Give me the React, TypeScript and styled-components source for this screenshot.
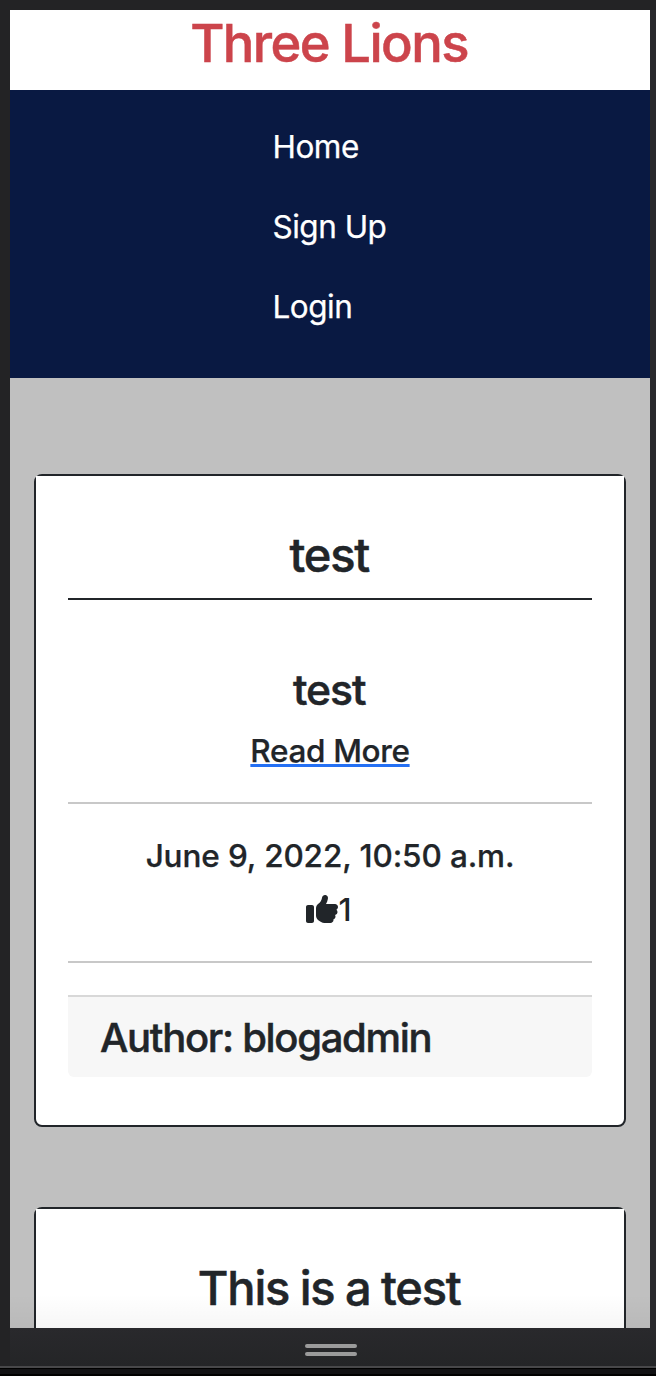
import React from "react";
import styled, { createGlobalStyle } from "styled-components";
import { FaThumbsUp } from "react-icons/fa6";

const GlobalStyle = createGlobalStyle`
  * { box-sizing: border-box; }
  body {
    margin: 0;
    background: #000;
    font-family: Inter, "Liberation Sans", sans-serif;
    color: #212529;
    overflow: hidden;
  }
  h1, h2, h3, h4, p { margin: 0; }
  h1, h2, h3, h4 { -webkit-text-stroke: 0.5px currentColor; }
  a, p { -webkit-text-stroke: 0.25px currentColor; }
`;

const Frame = styled.div`
  width: 656px;
  height: 1376px;
  display: flex;
  flex-direction: column;
  background: linear-gradient(90deg, #232325 0 10px, #29292c 10px);
`;

const Bezel = styled.div`
  height: 10px;
  flex: none;
  background: #232325;
`;

const Screen = styled.main`
  height: 1318px;
  flex: none;
  margin: 0 6px 0 10px;
  overflow: hidden;
  background: #c0c0c0;
  position: relative;

  &::after {
    content: "";
    position: absolute;
    inset: auto 0 0;
    height: 34px;
    background: linear-gradient(rgba(0, 0, 0, 0), rgba(0, 0, 0, 0.035));
  }
`;

const Header = styled.header`
  height: 80px;
  padding-right: 2px;
  background: #fff;
  text-align: center;
`;

const Brand = styled.h1`
  font-size: 52.5px;
  line-height: 67px;
  font-weight: 500;
  letter-spacing: -1.6px;
  color: #cc444b;
`;

const Nav = styled.nav`
  display: flex;
  flex-direction: column;
  width: 100%;
  height: 288px;
  padding: 17px 0 31px 262.5px;
  background: #091942;
`;

const NavLink = styled.a`
  padding: 16px 0;
  font-size: 31.5px;
  line-height: 48px;
  letter-spacing: -0.5px;
  color: #fff;
`;

const Feed = styled.section`
  display: flex;
  flex-direction: column;
  gap: 80px;
  padding: 96px 24px 0;
`;

const Card = styled.article`
  height: 653px;
  flex: none;
  border: 2px solid #212529;
  border-radius: 8px;
  background: #fff;
  text-align: center;
`;

const CardHead = styled.div`
  padding: 50px 32px 0;
  background: #fff;
`;

const CardBody = styled.div`
  padding: 0 32px;
`;

const CardTitle = styled.h2`
  height: 74px;
  padding-right: 1.5px;
  border-bottom: 2px solid #212529;
  font-size: 47px;
  line-height: 57px;
  font-weight: 500;
  letter-spacing: -1.2px;
  word-spacing: -0.8px;
`;

const Summary = styled.div`
  height: 204px;
  padding-top: 64px;
  border-bottom: 2px solid #c8c8c8;
`;

const Excerpt = styled.h3`
  padding-right: 1.5px;
  font-size: 42.7px;
  line-height: 52px;
  font-weight: 500;
  letter-spacing: -1.1px;
`;

const ReadMore = styled.a`
  display: block;
  margin-top: 11px;
  font-size: 31.5px;
  line-height: 48px;
  font-weight: 500;
  letter-spacing: -0.35px;
  text-decoration: underline #2470f4 3px;
  text-underline-offset: 2px;
  text-decoration-skip-ink: none;
`;

const Meta = styled.div`
  height: 159px;
  padding-top: 28px;
  border-bottom: 2px solid #c8c8c8;
`;

const PostDate = styled.p`
  font-size: 31.5px;
  line-height: 48px;
  font-weight: 500;
  letter-spacing: -0.13px;
`;

const Likes = styled.div`
  display: flex;
  justify-content: center;
  align-items: center;
  margin-top: 6px;
  padding-right: 2px;
  font-size: 31.5px;
  line-height: 48px;
  font-weight: 500;

  svg { width: 32px; height: 32px; margin-top: -2px; }
`;

const Footer = styled.footer`
  height: 82px;
  margin-top: 32px;
  padding: 17px 32px 0;
  border-top: 2px solid #d8d8d8;
  border-radius: 0 0 6px 6px;
  background: #f7f7f7;
  text-align: left;
`;

const Author = styled.h4`
  font-size: 40px;
  line-height: 48px;
  font-weight: 500;
  letter-spacing: -1.3px;
`;

const Dock = styled.div`
  height: 38px;
  flex: none;
  display: flex;
  flex-direction: column;
  align-items: center;
  gap: 4px;
  margin-left: 10px;
  padding: 16px 4px 0 0;
  background: linear-gradient(#29292c, #242527);
`;

const Grip = styled.span`
  width: 52px;
  height: 4px;
  border-radius: 2px;
  background: #9b9b9b;
`;

const Base = styled.div`
  height: 10px;
  flex: none;
  border-top: 2px solid #48484a;
  background: linear-gradient(#000 0 1px, #111113 1px 6px, #000 6px);
`;

export default function App() {
  return (
    <>
      <GlobalStyle />
      <Frame>
        <Bezel />
        <Screen>
          <Header>
            <Brand>Three Lions</Brand>
          </Header>
          <Nav>
            <NavLink>Home</NavLink>
            <NavLink>Sign Up</NavLink>
            <NavLink>Login</NavLink>
          </Nav>
          <Feed>
            <Card>
              <CardHead>
                <CardTitle>test</CardTitle>
              </CardHead>
              <CardBody>
                <Summary>
                  <Excerpt>test</Excerpt>
                  <ReadMore>Read More</ReadMore>
                </Summary>
                <Meta>
                  <PostDate>June 9, 2022, 10:50 a.m.</PostDate>
                  <Likes>
                    <FaThumbsUp />
                    <span>1</span>
                  </Likes>
                </Meta>
                <Footer>
                  <Author>Author: blogadmin</Author>
                </Footer>
              </CardBody>
            </Card>
            <Card>
              <CardHead>
                <CardTitle>This is a test</CardTitle>
              </CardHead>
            </Card>
          </Feed>
        </Screen>
        <Dock>
          <Grip />
          <Grip />
        </Dock>
        <Base />
      </Frame>
    </>
  );
}
